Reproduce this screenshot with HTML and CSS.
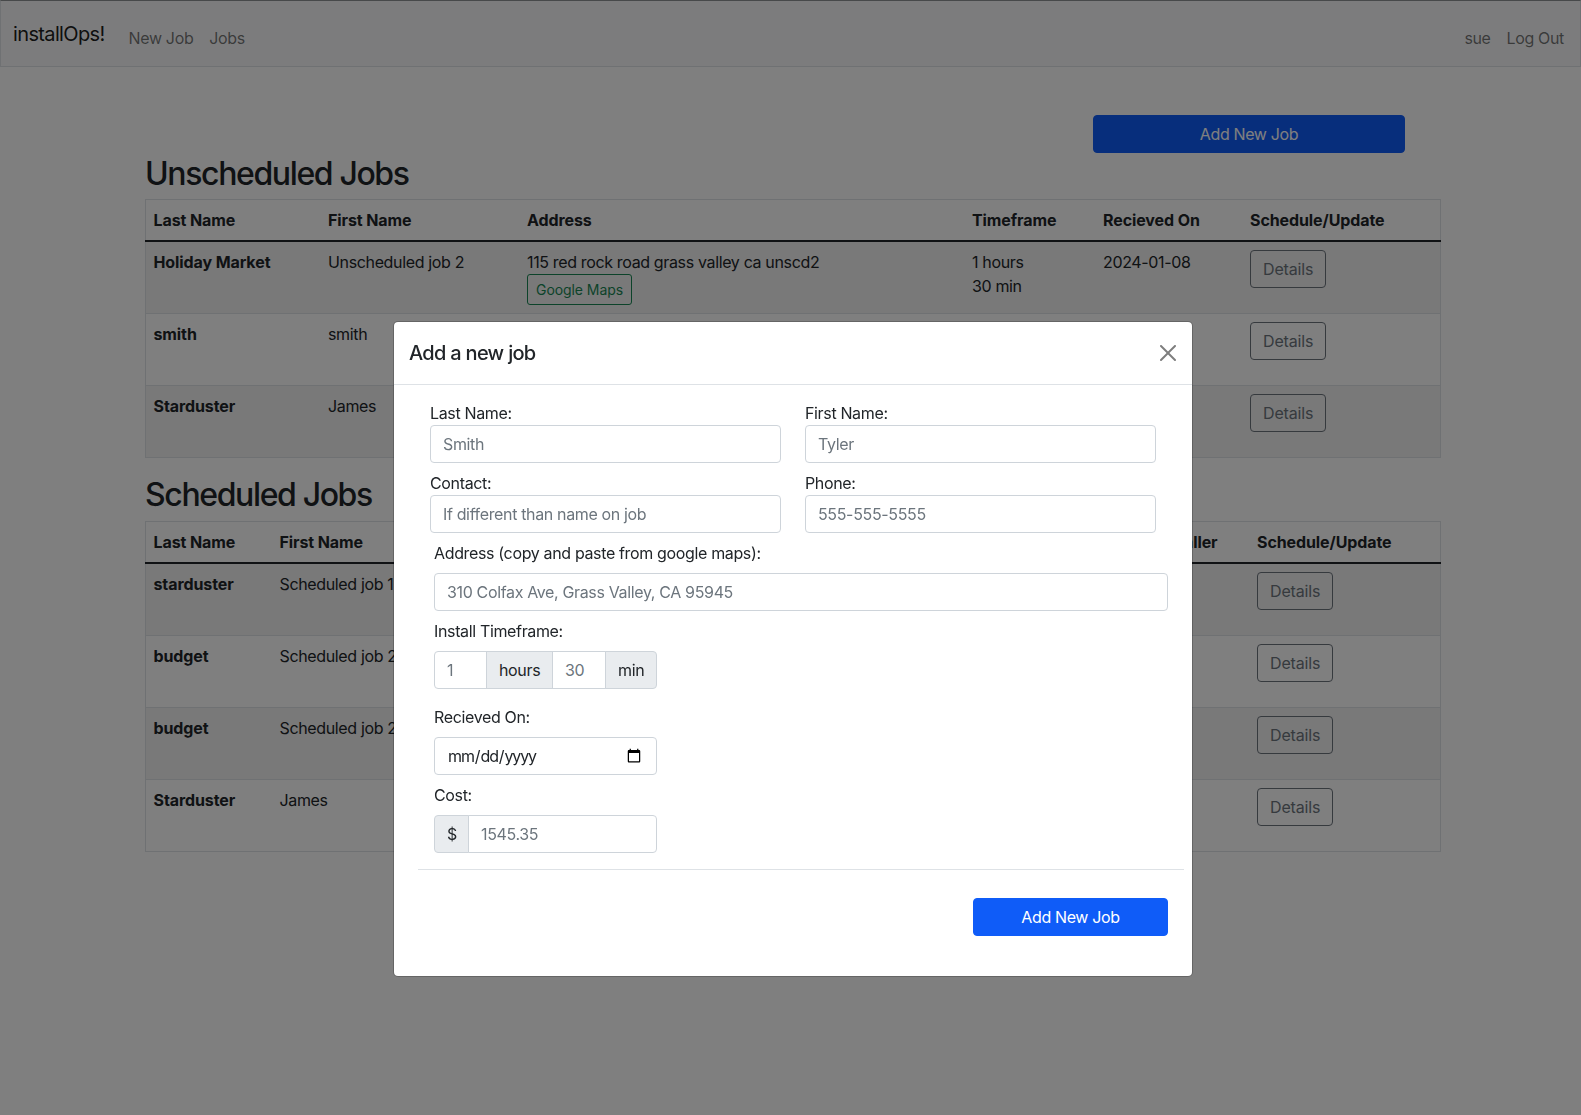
FILE: index.html
```html
<!DOCTYPE html>
<html lang="en">
<head>
<meta charset="utf-8">
<title>installOps!</title>
<link rel="stylesheet" href="styles.css">
</head>
<body>
<nav class="navbar">
  <a class="brand" href="#">installOps!</a>
  <a class="nav-link" href="#">New Job</a>
  <a class="nav-link" href="#">Jobs</a>
  <span class="nav-spacer"></span>
  <a class="nav-link" href="#">sue</a>
  <a class="nav-link" href="#">Log Out</a>
</nav>
<main class="page">
  <div class="page-actions"><button class="btn btn-primary btn-wide" type="button">Add New Job</button></div>
  <h2 class="section-title">Unscheduled Jobs</h2>
  <table class="jobs">
    <colgroup><col class="u1"><col class="u2"><col class="u3"><col class="u4"><col class="u5"><col class="u6"></colgroup>
    <thead><tr><th>Last Name</th><th>First Name</th><th>Address</th><th>Timeframe</th><th>Recieved On</th><th>Schedule/Update</th></tr></thead>
    <tbody>
      <tr><th>Holiday Market</th><td>Unscheduled job 2</td><td>115 red rock road grass valley ca unscd2<br><button class="btn btn-sm btn-maps" type="button">Google Maps</button></td><td>1 hours<br>30 min</td><td>2024-01-08</td><td><button class="btn btn-details" type="button">Details</button></td></tr>
      <tr><th>smith</th><td>smith</td><td></td><td></td><td></td><td><button class="btn btn-details" type="button">Details</button></td></tr>
      <tr><th>Starduster</th><td>James</td><td></td><td></td><td></td><td><button class="btn btn-details" type="button">Details</button></td></tr>
    </tbody>
  </table>
  <h2 class="section-title">Scheduled Jobs</h2>
  <table class="jobs">
    <colgroup><col class="s1"><col class="s2"><col class="s3"><col class="s4"><col class="s5"></colgroup>
    <thead><tr><th>Last Name</th><th>First Name</th><th></th><th>Installer</th><th>Schedule/Update</th></tr></thead>
    <tbody>
      <tr><th>starduster</th><td>Scheduled job 1</td><td></td><td></td><td><button class="btn btn-details" type="button">Details</button></td></tr>
      <tr><th>budget</th><td>Scheduled job 2</td><td></td><td></td><td><button class="btn btn-details" type="button">Details</button></td></tr>
      <tr><th>budget</th><td>Scheduled job 2</td><td></td><td></td><td><button class="btn btn-details" type="button">Details</button></td></tr>
      <tr><th>Starduster</th><td>James</td><td></td><td></td><td><button class="btn btn-details" type="button">Details</button></td></tr>
    </tbody>
  </table>
</main>
<div class="backdrop"></div>
<section class="modal">
  <header class="modal-header">
    <h5 class="modal-title">Add a new job</h5>
    <button class="btn-close" type="button" aria-label="Close">
      <svg viewBox="0 0 16 16" width="16" height="16"><path d="M.293.293a1 1 0 011.414 0L8 6.586 14.293.293a1 1 0 111.414 1.414L9.414 8l6.293 6.293a1 1 0 01-1.414 1.414L8 9.414l-6.293 6.293a1 1 0 01-1.414-1.414L6.586 8 .293 1.707a1 1 0 010-1.414z"/></svg>
    </button>
  </header>
  <form class="modal-body">
    <div class="name-grid">
      <div><label class="tight-label">Last Name:</label><input class="control" placeholder="Smith"></div>
      <div><label class="tight-label">First Name:</label><input class="control" placeholder="Tyler"></div>
      <div><label class="tight-label">Contact:</label><input class="control" placeholder="If different than name on job"></div>
      <div><label class="tight-label">Phone:</label><input class="control" placeholder="555-555-5555"></div>
    </div>
    <div class="stack">
      <label class="field-label">Address (copy and paste from google maps):</label>
      <input class="control" placeholder="310 Colfax Ave, Grass Valley, CA 95945">
      <label class="field-label">Install Timeframe:</label>
      <div class="input-group group-narrow">
        <input class="control hours" placeholder="1"><span class="addon addon-hours">hours</span><input class="control minutes" placeholder="30"><span class="addon addon-min">min</span>
      </div>
      <label class="field-label label-gap">Recieved On:</label>
      <input class="control date-input" type="date">
      <label class="field-label">Cost:</label>
      <div class="input-group group-narrow">
        <span class="addon addon-dollar">$</span><input class="control cost" placeholder="1545.35">
      </div>
    </div>
    <hr class="divider">
    <div class="form-actions"><button class="btn btn-primary btn-submit" type="button">Add New Job</button></div>
  </form>
</section>
</body>
</html>
```
FILE: styles.css
```css
* { box-sizing: border-box; }
html, body { margin: 0; min-height: 100%; }
body {
  min-height: 1115px;
  background: #fff;
  color: #212529;
  font-family: Inter, "Liberation Sans", sans-serif;
  font-size: 16px;
  line-height: 24px;
  letter-spacing: -.022em;
}
.navbar {
  display: flex;
  align-items: center;
  height: 67px;
  padding: 16px 8px 8px 12px;
  background: #f8f9fa;
  border: 1px solid #dee2e6;
  border-top-color: #8f9295;
}
.brand {
  margin: 0 16px 8px 0;
  color: rgba(0, 0, 0, .9);
  font-size: 20px;
  line-height: 30px;
  letter-spacing: -.032em;
  text-decoration: none;
}
.nav-link {
  padding: 8px;
  color: rgba(0, 0, 0, .55);
  text-decoration: none;
}
.nav-spacer { flex: 1; }
.page { padding: 48px 141px 0 145px; }
.page-actions { display: flex; justify-content: flex-end; padding-right: 35px; }
.section-title {
  margin: 0 0 6px;
  padding-top: 2px;
  font-size: 32px;
  line-height: 38px;
  font-weight: 500;
  letter-spacing: -.043em;
}
.jobs + .section-title { margin-bottom: 7px; padding-top: 1px; }
.btn {
  display: inline-block;
  padding: 6px 12px;
  border: 1px solid transparent;
  border-radius: 4px;
  background: transparent;
  font: inherit;
  letter-spacing: inherit;
  text-align: center;
}
.btn-primary { background: #0f5cf8; border-color: #0f5cf8; color: #fff; }
.btn-wide { width: 312px; }
.btn-submit { width: 195px; }
.btn-sm {
  padding: 4px 8px;
  font-size: 14px;
  line-height: 21px;
  letter-spacing: -.005em;
  border-radius: 3px;
}
.btn-maps { border-color: #198754; color: #198754; }
.btn-details { border-color: #6c757d; color: #6c757d; letter-spacing: -.01em; }
.jobs {
  width: 100%;
  margin-bottom: 17px;
  border-collapse: collapse;
  table-layout: fixed;
  border: 1px solid #dee2e6;
}
.jobs th, .jobs td {
  padding: 8px 8px 8px 7.5px;
  text-align: left;
  vertical-align: top;
}
.jobs th { font-weight: 700; letter-spacing: -.006em; }
.jobs thead th { border-bottom: 2px solid #212529; }
.jobs tbody th, .jobs tbody td {
  height: 72px;
  border-bottom: 1px solid #dee2e6;
}
.jobs tbody tr:nth-child(odd) { background: rgba(0, 0, 0, .05); }
.u1 { width: 175px; }
.u2 { width: 199px; }
.u3 { width: 445px; }
.u4 { width: 131px; }
.u5 { width: 147px; }
.u6 { width: 198px; }
.s1 { width: 126.5px; }
.s2 { width: 228.5px; }
.s3 { width: 647px; }
.s4 { width: 102px; }
.s5 { width: 191px; }
.backdrop {
  position: fixed;
  inset: 0;
  background: rgba(0, 0, 0, .5);
}
.modal {
  position: absolute;
  left: 393px;
  top: 321px;
  width: 800px;
  height: 656px;
  background: #fff;
  border: 1px solid rgba(0, 0, 0, .2);
  border-radius: 5px;
  background-clip: padding-box;
}
.modal-header {
  display: flex;
  align-items: center;
  justify-content: space-between;
  padding: 16px 16px 16px 15px;
  border-bottom: 1px solid #dee2e6;
}
.modal-title {
  margin: 0;
  font-size: 20px;
  line-height: 30px;
  font-weight: 500;
  letter-spacing: -.035em;
}
.btn-close {
  display: flex;
  width: 32px;
  height: 32px;
  margin: -8px -8px -8px 0;
  padding: 8px;
  border: 0;
  background: transparent;
  opacity: .5;
}
.modal-body { padding: 16px 8px 0 24px; }
.name-grid {
  display: grid;
  grid-template-columns: 351px 351px;
  column-gap: 24px;
  row-gap: 8px;
  padding-left: 12px;
}
.tight-label { display: block; }
.control {
  display: block;
  width: 100%;
  height: 38px;
  padding: 6px 12px;
  border: 1px solid #ced4da;
  border-radius: 4px;
  background: #fff;
  color: #212529;
  font: inherit;
  letter-spacing: inherit;
}
.control::placeholder { color: #6c757d; opacity: 1; }
.stack { display: flex; flex-direction: column; padding: 8px 16px 0; }
.field-label { display: block; margin: 8px 0 8px; }
.stack > .field-label:first-child { margin-top: 0; }
.label-gap { margin-top: 16px; }
.group-narrow, .date-input { width: 223px; }
.date-input { letter-spacing: -.07em; }
.input-group { display: flex; }
.input-group .control { border-radius: 0; }
.addon {
  display: flex;
  align-items: center;
  height: 38px;
  padding: 6px 12px;
  background: #e9ecef;
  border: 1px solid #ced4da;
}
.hours { width: 53px; border-radius: 4px 0 0 4px !important; }
.addon-hours { width: 67px; margin-left: -1px; }
.minutes { width: 54px; margin-left: -1px; }
.addon-min { width: 52px; margin-left: -1px; border-radius: 0 4px 4px 0; }
.addon-dollar { width: 35px; border-radius: 4px 0 0 4px; }
.cost { flex: 1; margin-left: -1px; border-radius: 0 4px 4px 0 !important; }
.divider { height: 1px; margin: 16px 0 28px; border: 0; background: #dee2e6; }
.form-actions { display: flex; justify-content: flex-end; padding-right: 16px; }
```
